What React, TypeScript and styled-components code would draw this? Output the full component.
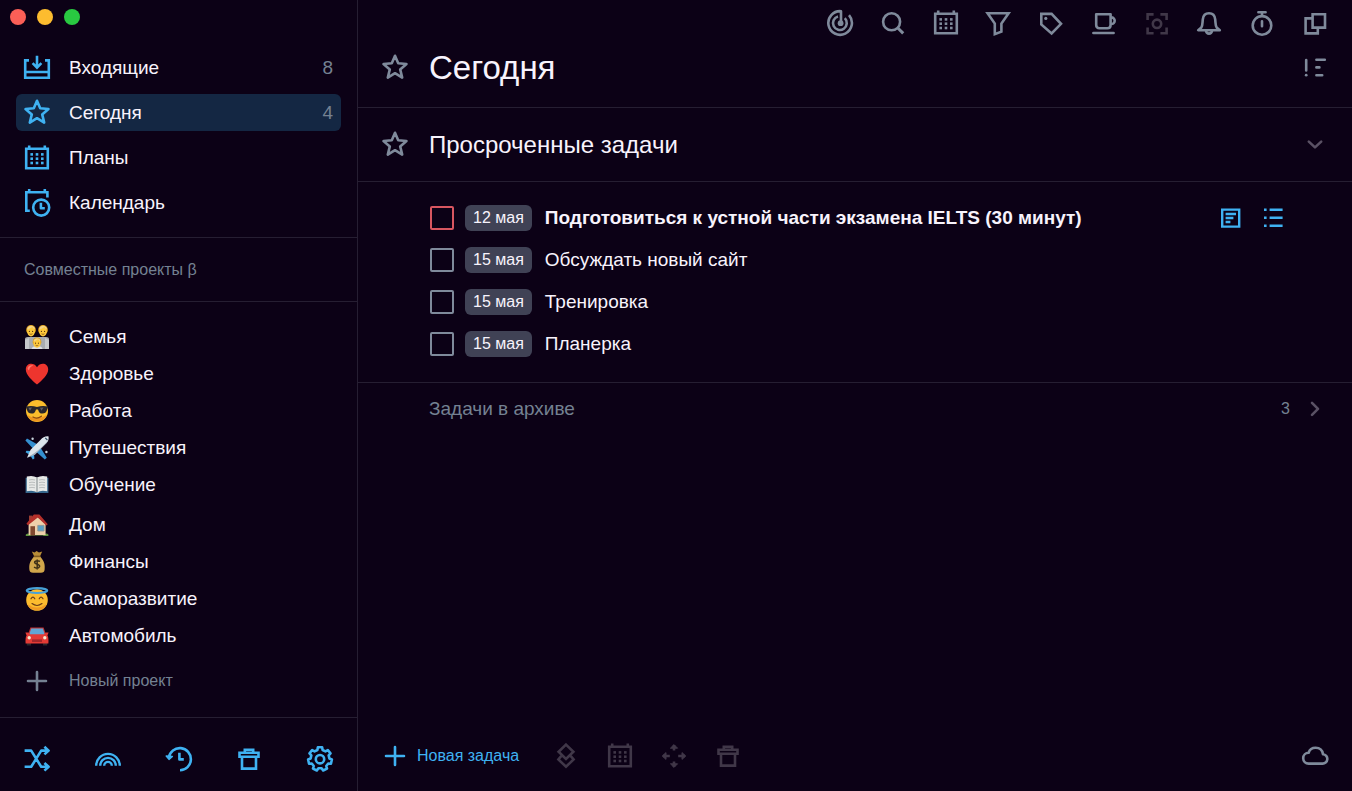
import React from 'react';
import styled, { createGlobalStyle } from 'styled-components';

const c = {
  bg: '#0c0116',
  line: '#261e32',
  text: '#f8f3fc',
  muted: '#748192',
  icon: '#7f8a9b',
  dim: '#403748',
  chevron: '#5a5164',
  blue: '#3fb2f2',
  active: '#142743',
  pill: '#404255',
  red: '#d85660',
};

const GlobalStyle = createGlobalStyle`
  *, *::before, *::after { box-sizing: border-box; }
  html, body { margin: 0; background: ${c.bg}; }
  body, button, input { font-family: "Liberation Sans", Arial, Helvetica, sans-serif; }
  button { border: 0; padding: 0; background: none; cursor: pointer; }
  h1, h2, p, ul { margin: 0; padding: 0; font-weight: 400; }
  ul { list-style: none; }
`;

const Shell = styled.div`
  display: grid;
  grid-template-columns: 358px minmax(0, 1fr);
  min-height: 100vh;
  background: ${c.bg};
  color: ${c.text};
`;

const Sidebar = styled.aside`
  display: flex;
  flex-direction: column;
  border-right: 1px solid ${c.line};
`;

const WindowButtons = styled.div`
  display: flex;
  gap: 11px;
  padding: 9px 10px 0;
`;

const Light = styled.button<{ $color: string }>`
  width: 16px;
  height: 16px;
  border-radius: 50%;
  background: ${(p) => p.$color};
`;

const Nav = styled.nav`
  display: flex;
  flex-direction: column;
  gap: 8px;
  padding: 24px 16px 16px;
  border-bottom: 1px solid ${c.line};
`;

const Row = styled.a<{ $active?: boolean }>`
  display: flex;
  align-items: center;
  gap: 18px;
  height: 37px;
  padding: 0 8px 0 7px;
  border-radius: 6px;
  color: ${c.text};
  background: ${(p) => (p.$active ? c.active : 'transparent')};
  font-size: 19px;
  line-height: 24px;
  text-decoration: none;
`;

const RowCount = styled.span`
  margin-left: auto;
  color: ${c.muted};
`;

const Shared = styled.p`
  height: 64px;
  padding: 0 24px;
  border-bottom: 1px solid ${c.line};
  color: ${c.muted};
  font-size: 16px;
  line-height: 64px;
`;

const Projects = styled.nav`
  display: flex;
  flex-direction: column;
  gap: 3px;
  padding: 16px 16px 0;
`;

const NewProject = styled.button`
  display: flex;
  align-items: center;
  gap: 18px;
  height: 37px;
  margin: 8px 16px 16px;
  padding: 0 7px;
  color: ${c.muted};
  font-size: 16px;
`;

const SideFooter = styled.footer`
  display: flex;
  justify-content: space-between;
  margin-top: auto;
  padding: 27px 23px 18px;
  border-top: 1px solid ${c.line};
  color: ${c.blue};
`;

const Main = styled.main`
  display: flex;
  flex-direction: column;
`;

const IconButton = styled.button<{ $tone?: 'icon' | 'dim' | 'blue' | 'chevron' }>`
  display: flex;
  flex: none;
  color: ${(p) => c[p.$tone ?? 'icon']};
`;

const Toolbar = styled.div`
  display: flex;
  justify-content: space-between;
  align-self: flex-end;
  width: 526px;
  padding: 9px 23px 0 0;
`;

const Heading = styled.header<{ $tall?: boolean }>`
  display: flex;
  align-items: center;
  gap: 20px;
  height: ${(p) => (p.$tall ? 74 : 71)}px;
  padding: ${(p) => (p.$tall ? '0 23px' : '0 23px 9px')};
  border-bottom: 1px solid ${c.line};
  color: ${c.icon};
`;

const Title = styled.h1`
  flex: 1;
  color: ${c.text};
  font-size: 33px;
  line-height: 40px;
`;

const Subtitle = styled.h2`
  flex: 1;
  color: ${c.text};
  font-size: 24px;
  line-height: 32px;
`;

const TaskList = styled.ul`
  padding: 15px 65px 17px 72px;
  border-bottom: 1px solid ${c.line};
`;

const Task = styled.li`
  display: flex;
  align-items: center;
  height: 42px;
`;

const Check = styled.input<{ $urgent?: boolean }>`
  appearance: none;
  flex: none;
  width: 24px;
  height: 24px;
  margin: 0 11px 0 0;
  border: 2px solid ${(p) => (p.$urgent ? c.red : c.icon)};
  border-radius: 2px;
  cursor: pointer;
`;

const Pill = styled.time`
  flex: none;
  height: 26px;
  margin-right: 13px;
  padding: 0 8px;
  border-radius: 6px;
  background: ${c.pill};
  font-size: 16px;
  line-height: 26px;
`;

const TaskName = styled.label<{ $strong?: boolean }>`
  flex: 1;
  font-size: 19px;
  line-height: 24px;
  font-weight: ${(p) => (p.$strong ? 700 : 400)};
`;

const TaskActions = styled.div`
  display: flex;
  gap: 14px;
`;

const Archive = styled.button`
  display: flex;
  align-items: center;
  height: 51px;
  padding: 0 23px 0 71px;
  color: ${c.muted};
  font-size: 19px;
  text-align: left;
`;

const ArchiveCount = styled.span`
  margin: 0 11px 0 auto;
  font-size: 16px;
`;

const ArchiveArrow = styled.span`
  color: ${c.chevron};
`;

const BottomBar = styled.footer`
  display: flex;
  align-items: center;
  gap: 26px;
  margin-top: auto;
  padding: 24px 23px 21px;
`;

const NewTask = styled.button`
  display: flex;
  align-items: center;
  gap: 8px;
  margin-right: 7px;
  color: ${c.blue};
  font-size: 16px;
`;

const Push = styled.div`
  margin-left: auto;
`;

const Svg = styled.svg`
  display: block;
  flex: none;
  width: 28px;
  height: 28px;
  fill: none;
  stroke: currentColor;
  stroke-width: 2.6;
  stroke-linejoin: round;
`;

const Blue = styled.span`
  display: flex;
  color: ${c.blue};
`;

const gearPath = (() => {
  const teeth = 7;
  const pts: string[] = [];
  for (let i = 0; i < teeth; i++) {
    const base = (i / teeth) * Math.PI * 2 - Math.PI / 2;
    [[-0.28, 9.4], [-0.18, 11.9], [0.18, 11.9], [0.28, 9.4]].forEach(([a, r]) => {
      pts.push(`${(14 + r * Math.cos(base + a)).toFixed(2)} ${(14 + r * Math.sin(base + a)).toFixed(2)}`);
    });
  }
  return `M${pts.join('L')}Z`;
})();

const dots = [8.7, 14, 19.3].flatMap((x) =>
  [10.4, 14.7, 19].map((y) => <rect key={`${x}-${y}`} x={x - 1.3} y={y - 1.3} width="2.6" height="2.6" fill="currentColor" stroke="none" />),
);

const shapes = {
  inbox: <path d="M6 6.4H2.2V23.7H25.8V6.4H22M2.2 18H25.8M14 1.8V13.4M9.6 9.2L14 13.6L18.4 9.2" strokeLinejoin="miter" />,
  star: <path d="M14 1.8L17.2 9.3L25.5 10L19.2 15.4L21.2 23.6L14 19.2L6.8 23.6L8.8 15.4L2.5 10L10.8 9.3Z" />,
  calendar: (
    <>
      <path d="M3.2 4.7H24.8V24.2H3.2ZM6.2 1.6V4.6M21.8 1.6V4.6" strokeLinejoin="miter" />
      {dots}
    </>
  ),
  calendarClock: (
    <>
      <path d="M6.8 21.8H3.3V3.2H24.4V8.6M6.2 0V3.2M21.8 0V3.2" strokeLinejoin="miter" />
      <circle cx="18.2" cy="18.6" r="8" />
      <path d="M17.9 13.8V19.2H21.8" />
    </>
  ),
  shuffle: <path d="M1.6 5.6H8.2L18.2 21.8H25M1.6 21.8H8.2L18.2 5.6H25M21.4 1.8L25.6 5.6L21.4 9.4M21.4 18L25.6 21.8L21.4 25.6" />,
  rainbow: <path d="M2.2 20.7A11.8 11.8 0 0 1 25.8 20.7M6.2 20.7A7.8 7.8 0 0 1 21.8 20.7M10.2 20.7A3.8 3.8 0 0 1 17.8 20.7" strokeWidth="2.4" />,
  history: (
    <>
      <path d="M3.8 12.5A11.1 11.1 0 1 1 15 25.3M14.4 7.8V14.4H18.8" />
      <path d="M1.2 11L4 14.4L7.4 11.4Z" fill="currentColor" stroke="currentColor" strokeWidth="1.4" />
    </>
  ),
  trash: <path d="M4.5 7.8H23.5V11.8H4.5ZM9.8 7.6V4.8H18.2V7.6M7 12V23.6H21V12" strokeLinejoin="miter" />,
  gear: (
    <>
      <path d={gearPath} />
      <circle cx="14" cy="14.2" r="4.2" />
    </>
  ),
  plus: <path d="M14 5V23M5 14H23" strokeLinecap="round" />,
  target: (
    <>
      <path d="M15 14V2.2A11.8 11.8 0 1 0 23 6.2" />
      <path d="M12 7.4A6.9 6.9 0 1 0 18.8 9.2" />
      <circle cx="14.6" cy="14.2" r="2.9" fill="currentColor" stroke="none" />
    </>
  ),
  search: (
    <>
      <circle cx="12.6" cy="12.8" r="8.5" />
      <path d="M18.6 18.8L24.2 24.4" strokeWidth="3" />
    </>
  ),
  filter: <path d="M3.6 4.2H24.6L17.4 14.6V22.6L10.8 25.2V14.6Z" strokeLinejoin="miter" />,
  tag: (
    <>
      <path d="M4.3 4.9H14.6L24 14.8L14.6 24.4L4.3 15.4Z" strokeLinejoin="miter" />
      <circle cx="8.8" cy="9.4" r="1.6" fill="currentColor" stroke="none" />
    </>
  ),
  cup: <path d="M6.2 5.2H20.6V16Q20.6 19.2 17.4 19.2H9.4Q6.2 19.2 6.2 16ZM20.8 8.4C26 8 26 15.4 20.8 15M3.4 24H23.6" strokeLinecap="round" />,
  focus: (
    <>
      <path d="M10.6 5.4H4.6V11M17.4 5.4H23.6V11M4.6 18.4V24.2H10.6M23.6 18.4V24.2H17.4" strokeLinejoin="miter" />
      <circle cx="14" cy="14.8" r="4.2" />
    </>
  ),
  bell: (
    <>
      <path d="M3.2 21.2H24.8L21.6 18.4C20.4 16.6 20.6 14 20.2 10.4C19.8 6.2 17.2 4.2 14 4.2S8.2 6.2 7.8 10.4C7.4 14 7.6 16.6 6.4 18.4Z" />
      <path d="M11 21.6A3 3 0 0 0 17 21.6" />
    </>
  ),
  timer: (
    <>
      <circle cx="14" cy="16.4" r="9.3" />
      <path d="M10.4 3.2H17.6M14 3.2V6.8M14 12.2V17.2" strokeLinecap="round" />
    </>
  ),
  windows: <path d="M11.6 5.2H24V18.6H11.6ZM11.2 9.4H4.6V24.4H16.8V19" strokeLinejoin="miter" />,
  sort: (
    <>
      <path d="M5.2 6V16.5M15.4 5.8H23.8M15.4 13.4H18.4M15.4 21.2H21.2" strokeLinecap="round" />
      <circle cx="5.2" cy="21.2" r="1.4" fill="currentColor" stroke="none" />
    </>
  ),
  down: <path d="M7.8 10.6L14 16.4L20.2 10.6" strokeLinecap="round" />,
  right: <path d="M11 7.8L17 13.8L11 19.8" strokeLinecap="round" />,
  note: <path d="M5.2 5.6H22.2V22.6H5.2ZM8.6 10H19M8.6 14H16.4M8.6 18H13.4" strokeLinejoin="miter" strokeWidth="2.4" />,
  list: <path d="M5 5.8H7.6M5 13.8H7.6M5 21.8H7.6M10.6 5.8H23.6M10.6 13.8H23.6M10.6 21.8H23.6" />,
  repeat: <path d="M14 2.6L21.4 9.8L14 17L6.6 9.8ZM9.2 14.2L6.4 17.4L14 24.8L21.6 17.4L18.8 14.2" strokeLinejoin="miter" />,
  move: (
    <>
      <path d="M3 14H9.8M25 14H18.2M14 3V8.6M14 25V19.4" />
      <path d="M6 10.6L2.2 14L6 17.4ZM22 10.6L25.8 14L22 17.4ZM10.4 6.2L14 2.6L17.6 6.2ZM10.4 21.8L14 25.4L17.6 21.8Z" fill="currentColor" strokeWidth="1" />
    </>
  ),
  cloud: <path d="M7.6 21.6H21.2A4.7 4.7 0 0 0 22 12.2C21.4 8.2 18.4 5.8 14.6 5.8C11.2 5.8 8.6 7.6 7.6 10.8A5.4 5.4 0 0 0 7.6 21.6Z" />,
};

type IconName = keyof typeof shapes;

const Icon = ({ name }: { name: IconName }) => (
  <Svg viewBox="0 0 28 28" aria-hidden="true">
    {shapes[name]}
  </Svg>
);

const Picture = styled.svg`
  display: block;
  flex: none;
  width: 24px;
  height: 24px;
  margin: 0 2px;
`;

const Head = ({ x, y, s = 1 }: { x: number; y: number; s?: number }) => (
  <g transform={`translate(${x} ${y}) scale(${s})`}>
    <path d="M-4.8 0C-5.6-8 5.6-8 4.8 0L3.8 2H-3.8Z" fill="#d99b1c" />
    <ellipse cy="0.6" rx="3.9" ry="4.8" fill="#fdc83c" />
    <path d="M-4-1.2C-2-2 0-3.2 1.2-4C2-2.6 3.4-1.8 4-1.4C4-6.4-4-6.4-4-1.2Z" fill="#f3d489" />
    <circle cx="-1.6" cy="0.4" r="0.6" fill="#5c3510" />
    <circle cx="1.6" cy="0.4" r="0.6" fill="#5c3510" />
    <path d="M-1.5 2.8Q0 4 1.5 2.8" fill="none" stroke="#7a430f" strokeWidth="0.7" />
  </g>
);

const pictures = {
  family: (
    <>
      <path d="M0 24V14Q0 12 3 12H21Q24 12 24 14V24Z" fill="#a9acb1" />
      <path d="M0 24V15L4 13V24ZM24 24V15L20 13V24Z" fill="#c6c8cb" />
      <Head x={6} y={6} />
      <Head x={18} y={6} />
      <path d="M6.5 24Q7 21 12 21T17.5 24Z" fill="#dfe1e4" />
      <Head x={12} y={17.8} s={0.9} />
    </>
  ),
  heart: (
    <>
      <path d="M12 22.6C7 18 0.8 12.8 0.8 7.4C0.8 0.6 9 0 12 5.2C15 0 23.2 0.6 23.2 7.4C23.2 12.8 17 18 12 22.6Z" fill="#ee352e" />
      <path d="M2.6 7C2.6 3.6 6 2.4 8.4 3.6C6 4.2 4.4 6 4 8.6Z" fill="#ff776b" />
    </>
  ),
  cool: (
    <>
      <circle cx="12" cy="12" r="11" fill="#fbbd2c" />
      <path d="M2 16A11 11 0 0 0 22 16Q12 22 2 16Z" fill="#ee9620" />
      <path d="M0.8 7.6Q6.5 6 12 8Q17.5 6 23.2 7.6L22 11Q21 14.6 17.4 14.6Q14 14.6 13 10.4H11Q10 14.6 6.6 14.6Q3 14.6 2 11Z" fill="#28262b" />
      <path d="M3.4 8.8L7 8.4L5 11.8ZM15 8.8L18.6 8.4L16.4 11.8Z" fill="#5e5b61" />
      <path d="M8 18Q12 20.4 16.4 17.2" fill="none" stroke="#8a4a12" strokeWidth="1.2" strokeLinecap="round" />
    </>
  ),
  plane: (
    <>
      <path d="M12.6 8.4L2 2.4L0.4 4.4L8.2 12.8ZM15.4 11.6L21.8 21.8L19.8 23.6L11.2 15.8Z" fill="#348fd0" />
      <path d="M6.6 15L1.4 14.8L0.6 16.2L5 19ZM9 17.6L9.4 22.6L7.8 23.6L5 19Z" fill="#3fa2df" />
      <path d="M23.6 0.4C20 0 18 1.4 15.4 4L5.6 13.8L2 21.8L10 18.6L20 8.6C22.8 5.8 24 4 23.6 0.4Z" fill="#dce5ec" />
      <path d="M23 4C20.8 8 12 16 2 21.8L10 18.6L20 8.6C22 6.6 23 5.4 23 4Z" fill="#9dadbb" />
      <path d="M20.2 1.8L22.4 4" stroke="#324b63" strokeWidth="1.2" />
      <circle cx="7.6" cy="2.8" r="1.2" fill="#c6d3dc" />
      <circle cx="21.4" cy="16" r="1.2" fill="#c6d3dc" />
    </>
  ),
  book: (
    <>
      <path d="M0.6 4.8H23.4V20H0.6Z" fill="#35668c" />
      <path d="M1.8 3.6Q8 2.2 12 4.6Q16 2.2 22.2 3.6V18.2Q16 16.8 12 19.2Q8 16.8 1.8 18.2Z" fill="#e7e9e7" />
      <path d="M12 4.6V19.2" stroke="#8f9899" strokeWidth="1.2" />
      <path d="M4 7Q7 6.2 10 7M4 9.6Q7 8.8 10 9.6M4 12.2Q7 11.4 10 12.2M4 14.8Q7 14 10 14.8M14 7Q17 6.2 20 7M14 9.6Q17 8.8 20 9.6M14 12.2Q17 11.4 20 12.2M14 14.8Q17 14 20 14.8" stroke="#aeb3b3" strokeWidth="0.8" fill="none" />
    </>
  ),
  house: (
    <>
      <path d="M0.8 21.4Q4 19 6 22.6H18Q21 19 23.4 21.4V23H0.8Z" fill="#629541" />
      <path d="M3.6 10.4L12.4 4L20.6 10.8V22H3.6Z" fill="#eed0aa" />
      <path d="M4 2.6H7.4V8H4Z" fill="#9b3d32" />
      <path d="M1.4 10.8L8.8 1.6H14.4L22.8 11.2L21.2 12.6L12.8 4.4L3 12.2Z" fill="#b5302a" />
      <path d="M5.4 13.2H10V22.4H5.4Z" fill="#80492f" />
      <path d="M12.8 12.4H19V18H12.8Z" fill="#5ba0c4" stroke="#8f9796" strokeWidth="0.9" />
    </>
  ),
  money: (
    <>
      <path d="M6.8 1.6L9.6 2.4L11.6 1L14 2.4L17.2 1.6L15 6.2H9.2Z" fill="#b98d37" />
      <path d="M9 6.4H15.2C19.8 12 20 14.4 19.6 19.8Q19.4 22.8 16 22.8H8Q4.6 22.8 4.4 19.8C4 14.4 4.4 12 9 6.4Z" fill="#d1a64b" />
      <path d="M8.8 6.4H15.4" stroke="#825d21" strokeWidth="1.6" />
      <path d="M15 11.4Q12 9.8 9.8 11.6C8.4 14.4 15 13.6 14.6 16.6Q12.8 19.4 9 17.2M12.2 9.4V19.6" fill="none" stroke="#3e3018" strokeWidth="1.5" />
    </>
  ),
  angel: (
    <>
      <circle cx="12" cy="13" r="10.8" fill="#fcbc2e" />
      <path d="M2.2 17A10.8 10.8 0 0 0 21.8 17Q12 24 2.2 17Z" fill="#f09a23" />
      <ellipse cx="12" cy="3.6" rx="10.2" ry="2.4" fill="none" stroke="#47a1d7" strokeWidth="2.2" />
      <path d="M6 11.8Q8 8.6 9.8 11.8M14.2 11.8Q16 8.6 18 11.8M7 16.6Q12 20.4 17 16.6" fill="none" stroke="#6b3c16" strokeWidth="1.2" strokeLinecap="round" />
    </>
  ),
  car: (
    <>
      <path d="M5.4 3.4H18.6L21.2 11H2.8Z" fill="#c33131" />
      <path d="M6.2 4.6H17.8L20 11H4Z" fill="#62a6d4" />
      <path d="M1.8 17H6V21.6H1.8ZM18 17H22.2V21.6H18Z" fill="#29272d" />
      <path d="M0.4 8.6H3.4L5 10.2H19L20.6 8.6H23.6L22.4 11.4Q23.8 13 23.4 19.6H0.6Q0.2 13 1.6 11.4Z" fill="#e43a35" />
      <path d="M7 15.4H17V18H7Z" fill="#a3262a" />
      <circle cx="4.2" cy="13.8" r="1.7" fill="#f6e8cf" />
      <circle cx="19.8" cy="13.8" r="1.7" fill="#f6e8cf" />
    </>
  ),
};

type PictureName = keyof typeof pictures;

const navItems: { name: string; icon: IconName; count?: number; active?: boolean }[] = [
  { name: 'Входящие', icon: 'inbox', count: 8 },
  { name: 'Сегодня', icon: 'star', count: 4, active: true },
  { name: 'Планы', icon: 'calendar' },
  { name: 'Календарь', icon: 'calendarClock' },
];

const projectGroups: { name: string; picture: PictureName }[][] = [
  [
    { name: 'Семья', picture: 'family' },
    { name: 'Здоровье', picture: 'heart' },
    { name: 'Работа', picture: 'cool' },
    { name: 'Путешествия', picture: 'plane' },
    { name: 'Обучение', picture: 'book' },
  ],
  [
    { name: 'Дом', picture: 'house' },
    { name: 'Финансы', picture: 'money' },
    { name: 'Саморазвитие', picture: 'angel' },
    { name: 'Автомобиль', picture: 'car' },
  ],
];

const sideTools: [IconName, string][] = [
  ['shuffle', 'Перемешать'],
  ['rainbow', 'Радуга'],
  ['history', 'История'],
  ['trash', 'Корзина'],
  ['gear', 'Настройки'],
];

const tools: [IconName, string][] = [
  ['target', 'Цели'],
  ['search', 'Поиск'],
  ['calendar', 'Календарь'],
  ['filter', 'Фильтр'],
  ['tag', 'Метки'],
  ['cup', 'Перерыв'],
  ['focus', 'Фокус'],
  ['bell', 'Уведомления'],
  ['timer', 'Таймер'],
  ['windows', 'Окна'],
];

const taskTools: [IconName, string][] = [
  ['repeat', 'Приоритет'],
  ['calendar', 'Дата'],
  ['move', 'Переместить'],
  ['trash', 'Удалить'],
];

const tasks = [
  { date: '12 мая', name: 'Подготовиться к устной части экзамена IELTS (30 минут)', urgent: true },
  { date: '15 мая', name: 'Обсуждать новый сайт' },
  { date: '15 мая', name: 'Тренировка' },
  { date: '15 мая', name: 'Планерка' },
];

export default function App() {
  return (
    <Shell>
      <GlobalStyle />
      <Sidebar>
        <WindowButtons>
          <Light $color="#fb5f57" aria-label="Закрыть" />
          <Light $color="#fdbc2f" aria-label="Свернуть" />
          <Light $color="#29c941" aria-label="Развернуть" />
        </WindowButtons>
        <Nav>
          {navItems.map((item) => (
            <Row key={item.name} href="#" $active={item.active}>
              <Blue>
                <Icon name={item.icon} />
              </Blue>
              {item.name}
              {item.count !== undefined && <RowCount>{item.count}</RowCount>}
            </Row>
          ))}
        </Nav>
        <Shared>Совместные проекты β</Shared>
        <Projects>
          {projectGroups.map((group) => (
            <div key={group[0].name}>
              {group.map((p) => (
                <Row key={p.name} href="#">
                  <Picture viewBox="0 0 24 24" aria-hidden="true">
                    {pictures[p.picture]}
                  </Picture>
                  {p.name}
                </Row>
              ))}
            </div>
          ))}
        </Projects>
        <NewProject>
          <Icon name="plus" />
          Новый проект
        </NewProject>
        <SideFooter>
          {sideTools.map(([icon, label]) => (
            <IconButton key={icon} $tone="blue" aria-label={label}>
              <Icon name={icon} />
            </IconButton>
          ))}
        </SideFooter>
      </Sidebar>
      <Main>
        <Toolbar>
          {tools.map(([icon, label]) => (
            <IconButton key={icon} $tone={icon === 'focus' ? 'dim' : 'icon'} aria-label={label}>
              <Icon name={icon} />
            </IconButton>
          ))}
        </Toolbar>
        <Heading>
          <Icon name="star" />
          <Title>Сегодня</Title>
          <IconButton aria-label="Сортировка">
            <Icon name="sort" />
          </IconButton>
        </Heading>
        <Heading as="div" $tall>
          <Icon name="star" />
          <Subtitle>Просроченные задачи</Subtitle>
          <IconButton $tone="chevron" aria-label="Свернуть раздел">
            <Icon name="down" />
          </IconButton>
        </Heading>
        <TaskList>
          {tasks.map((t, i) => (
            <Task key={t.name}>
              <Check type="checkbox" id={`task-${i}`} $urgent={t.urgent} />
              <Pill>{t.date}</Pill>
              <TaskName htmlFor={`task-${i}`} $strong={t.urgent}>
                {t.name}
              </TaskName>
              {t.urgent && (
                <TaskActions>
                  <IconButton $tone="blue" aria-label="Заметка">
                    <Icon name="note" />
                  </IconButton>
                  <IconButton $tone="blue" aria-label="Подзадачи">
                    <Icon name="list" />
                  </IconButton>
                </TaskActions>
              )}
            </Task>
          ))}
        </TaskList>
        <Archive>
          Задачи в архиве
          <ArchiveCount>3</ArchiveCount>
          <ArchiveArrow>
            <Icon name="right" />
          </ArchiveArrow>
        </Archive>
        <BottomBar>
          <NewTask>
            <Icon name="plus" />
            Новая задача
          </NewTask>
          {taskTools.map(([icon, label]) => (
            <IconButton key={icon} $tone="dim" aria-label={label}>
              <Icon name={icon} />
            </IconButton>
          ))}
          <Push>
            <IconButton aria-label="Синхронизация">
              <Icon name="cloud" />
            </IconButton>
          </Push>
        </BottomBar>
      </Main>
    </Shell>
  );
}
